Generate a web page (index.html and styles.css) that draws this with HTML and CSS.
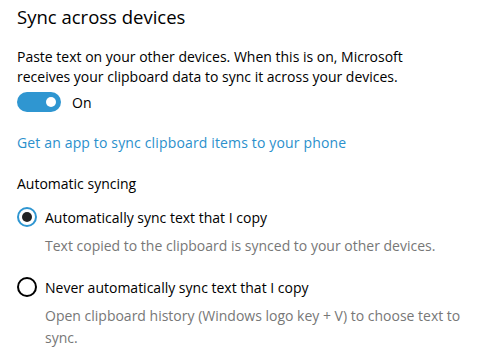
FILE: index.html
```html
<!DOCTYPE html>
<html lang="en">
<head>
  <meta charset="UTF-8" />
  <title>Clipboard - Sync across devices</title>
  <link rel="stylesheet" href="styles.css">
</head>
<body>
  <section class="sync">
    <h2>Sync across devices</h2>
    <p class="intro">Paste text on your other devices. When this is on, Microsoft receives your clipboard data to sync it across your devices.</p>

    <label class="toggle">
      <span class="switch on"><span class="knob"></span></span>
      <span>On</span>
    </label>

    <a href="#" class="link">Get an app to sync clipboard items to your phone</a>

    <h3>Automatic syncing</h3>

    <div class="option">
      <label class="radio">
        <span class="dot checked"></span>
        <span>Automatically sync text that I copy</span>
      </label>
      <p class="hint">Text copied to the clipboard is synced to your other devices.</p>
    </div>

    <div class="option">
      <label class="radio">
        <span class="dot"></span>
        <span>Never automatically sync text that I copy</span>
      </label>
      <p class="hint">Open clipboard history (Windows logo key + V) to choose text to sync.</p>
    </div>
  </section>
</body>
</html>
```

FILE: styles.css
```css
body {
  font-family: "Open Sans", "Noto Sans", sans-serif;
  margin: 0;
  background: #fff;
  color: #000;
  font-size: 14px;
}
.sync {
  padding: 4px 0 0 17px;
  width: 445px;
}
h2 {
  font-size: 18.5px;
  font-weight: 400;
  margin: 0;
  line-height: 26px;
}
.intro {
  margin: 17px 0 0;
  line-height: 20px;
  max-width: 400px;
}
.toggle {
  display: flex;
  align-items: center;
  gap: 11px;
  margin-top: 5px;
  height: 20px;
}
.switch {
  width: 44px;
  height: 20px;
  border-radius: 10px;
  background: #2f96d1;
  display: flex;
  align-items: center;
  justify-content: flex-end;
  box-sizing: border-box;
  padding-right: 5px;
}
.knob {
  width: 10px;
  height: 10px;
  border-radius: 50%;
  background: #fff;
}
.link {
  display: block;
  color: #2b90cc;
  text-decoration: none;
  margin-top: 21px;
  line-height: 20px;
  letter-spacing: 0.15px;
}
h3 {
  font-size: 14px;
  font-weight: 400;
  margin: 21px 0 0;
  line-height: 20px;
}
.option {
  margin-top: 13px;
}
.option + .option {
  margin-top: 20px;
}
.radio {
  display: flex;
  align-items: center;
  gap: 8px;
  height: 20px;
}
.dot {
  width: 20px;
  height: 20px;
  border: 2px solid #000;
  border-radius: 50%;
  box-sizing: border-box;
  display: flex;
  align-items: center;
  justify-content: center;
}
.dot.checked {
  border-color: #2f96d1;
}
.dot.checked::after {
  content: "";
  width: 10px;
  height: 10px;
  border-radius: 50%;
  background: #222;
}
.hint {
  margin: 8px 0 0 28px;
  color: #777;
  line-height: 22px;
}
```
